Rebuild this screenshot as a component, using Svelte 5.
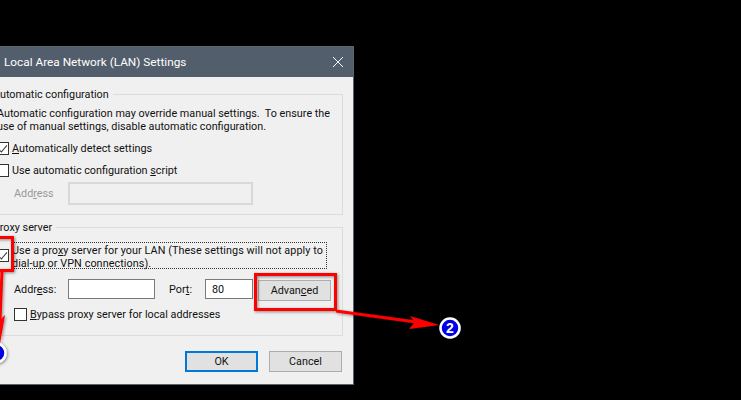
<script>
  let detect = true;
  let script = false;
  let proxy = true;
  let bypass = false;
</script>

<div class="dialog">
  <div class="titlebar">
    <span class="title">Local Area Network (LAN) Settings</span>
    <svg class="close" width="12" height="12" viewBox="0 0 12 12">
      <path d="M1 1 L11 11 M11 1 L1 11" stroke="#fff" stroke-width="1" fill="none" />
    </svg>
  </div>

  <div class="content">
    <fieldset class="group first">
      <legend>Automatic configuration</legend>
      <p class="note">
        Automatic configuration may override manual settings.&nbsp; To ensure the<br />
        use of manual settings, disable automatic configuration.
      </p>
      <label class="check detect">
        <input type="checkbox" bind:checked={detect} />
        <span class="box"></span>
        <span><u>A</u>utomatically detect settings</span>
      </label>
      <label class="check scriptcheck">
        <input type="checkbox" bind:checked={script} />
        <span class="box"></span>
        <span>Use automatic configuration <u>s</u>cript</span>
      </label>
      <div class="row disabled">
        <span class="field-label">Add<u>r</u>ess</span>
        <div class="input wide"></div>
      </div>
    </fieldset>

    <fieldset class="group second">
      <legend>Proxy server</legend>
      <label class="check proxy">
        <input type="checkbox" bind:checked={proxy} />
        <span class="box"></span>
        <span class="focus">Use a pro<u>x</u>y server for your LAN (These settings will not apply to<br />dial-up or VPN connections).</span>
      </label>
      <div class="row addr">
        <span class="field-label">Addr<u>e</u>ss:</span>
        <div class="input mid"></div>
        <span class="port-label">Por<u>t</u>:</span>
        <div class="input port">80</div>
        <button class="btn advanced">Advan<u>c</u>ed</button>
      </div>
      <label class="check bypass">
        <input type="checkbox" bind:checked={bypass} />
        <span class="box"></span>
        <span><u>B</u>ypass proxy server for local addresses</span>
      </label>
    </fieldset>

    <div class="actions">
      <button class="btn ok">OK</button>
      <button class="btn">Cancel</button>
    </div>
  </div>
</div>

<!-- annotations drawn on top of the screenshot -->
<svg class="marks" width="741" height="400" viewBox="0 0 741 400">
  <defs>
    <filter id="soft" x="-20%" y="-20%" width="140%" height="140%">
      <feDropShadow dx="1" dy="1" stdDeviation="1.5" flood-color="#000" flood-opacity="0.45" />
    </filter>
  </defs>
  <g filter="url(#soft)">
    <rect x="-6" y="237.5" width="18.5" height="33" fill="none" stroke="#f00" stroke-width="3" />
    <rect x="255.5" y="274.5" width="80" height="35" fill="none" stroke="#f00" stroke-width="3" />
    <path d="M336 311 L416 322" stroke="#f00" stroke-width="3" fill="none" />
    <path d="M439 325 L410 316 L415 322 L409 329 Z" fill="#f00" />
    <path d="M2 271 L0 320" stroke="#f00" stroke-width="3" fill="none" />
    <path d="M5 315 L-6 326 L-1 330 L0 344 Z" fill="#f00" />
    <circle cx="-4" cy="353" r="9.5" fill="#0000e6" stroke="#fff" stroke-width="2.5" />
    <circle cx="450" cy="328" r="9.5" fill="#0000e6" stroke="#fff" stroke-width="2.5" />
  </g>
  <text x="450" y="333" text-anchor="middle" class="num">2</text>
</svg>

<style>
  :global(body) {
    background: #000;
    overflow: hidden;
    height: 400px;
  }

  .dialog {
    box-sizing: border-box;
    width: 374px;
    height: 339px;
    margin: 46px 0 0 -20px;
    border: 1px solid #5b6572;
    background: #f0f0f0;
    font-family: Roboto, sans-serif;
    font-size: 10.8px;
    color: #111;
    line-height: 13px;
  }

  .titlebar {
    height: 30px;
    background: #535e6c;
    color: #fff;
    display: flex;
    align-items: center;
    justify-content: space-between;
    padding: 0 9px 0 23px;
  }

  .title {
    font-size: 11.8px;
  }

  .close {
    display: block;
  }

  .content {
    padding: 11px 10px 0 11px;
  }

  .group {
    box-sizing: border-box;
    margin: 0;
    border: 1px solid #dcdcdc;
    padding: 0;
    position: relative;
    min-width: 0;
  }

  .group legend {
    padding: 0 4px 0 0;
    margin-left: 0;
    line-height: 13px;
  }

  .first {
    height: 127px;
  }

  .second {
    height: 115px;
    margin-top: 6px;
  }

  .note {
    margin: 6px 0 0 4px;
    white-space: nowrap;
  }

  .check {
    display: flex;
    align-items: flex-start;
    gap: 3px;
    margin-left: 3px;
  }

  .check input {
    position: absolute;
    opacity: 0;
    width: 0;
    height: 0;
  }

  .box {
    flex: none;
    box-sizing: border-box;
    width: 13px;
    height: 13px;
    border: 1px solid #333;
    background: #fff;
    position: relative;
  }

  .check input:checked + .box::after {
    content: "";
    position: absolute;
    left: 3px;
    top: 0;
    width: 4px;
    height: 8px;
    border: solid #333;
    border-width: 0 1px 1px 0;
    transform: rotate(40deg);
  }

  .detect {
    margin-top: 9px;
  }

  .scriptcheck {
    margin-top: 9px;
  }

  .row {
    display: flex;
    align-items: center;
  }

  .disabled {
    margin: 5px 0 0 21px;
    color: #999;
  }

  .field-label {
    width: 54px;
    flex: none;
  }

  .input {
    box-sizing: border-box;
    height: 23px;
    border: 1px solid #7a7a7a;
    background: #fff;
    padding-left: 6px;
    display: flex;
    align-items: center;
  }

  .wide {
    width: 185px;
    border: 2px solid #d8d8d8;
    background: #f0f0f0;
  }

  .proxy {
    margin-top: 8px;
  }

  .proxy .box {
    margin-top: 7px;
  }

  .focus {
    border: 1px dotted #333;
    padding: 1px 3px 1px 0;
    width: 316px;
    box-sizing: border-box;
    margin-left: -1px;
    height: 27px;
    white-space: nowrap;
    letter-spacing: 0.08px;
  }

  .addr {
    margin: 9px 0 0 21px;
    height: 22px;
  }

  .mid {
    width: 87px;
    height: 20px;
  }

  .port-label {
    margin-left: 14px;
    width: 36px;
    flex: none;
  }

  .port {
    width: 48px;
    height: 20px;
  }

  .btn {
    box-sizing: border-box;
    height: 21px;
    border: 1px solid #adadad;
    background: #e1e1e1;
    font: inherit;
    color: #111;
    padding: 0;
    width: 73px;
  }

  .advanced {
    margin-left: 5px;
    margin-top: 2px;
  }

  .bypass {
    margin: 8px 0 0 21px;
  }

  .actions {
    display: flex;
    justify-content: flex-end;
    gap: 11px;
    margin: 15px 1px 0 0;
  }

  .ok {
    border: 2px solid #0078d7;
  }

  .marks {
    position: absolute;
    left: 0;
    top: 0;
    pointer-events: none;
  }

  .num {
    font-family: "Liberation Sans", sans-serif;
    font-size: 14px;
    font-weight: bold;
    fill: #fff;
  }
</style>
